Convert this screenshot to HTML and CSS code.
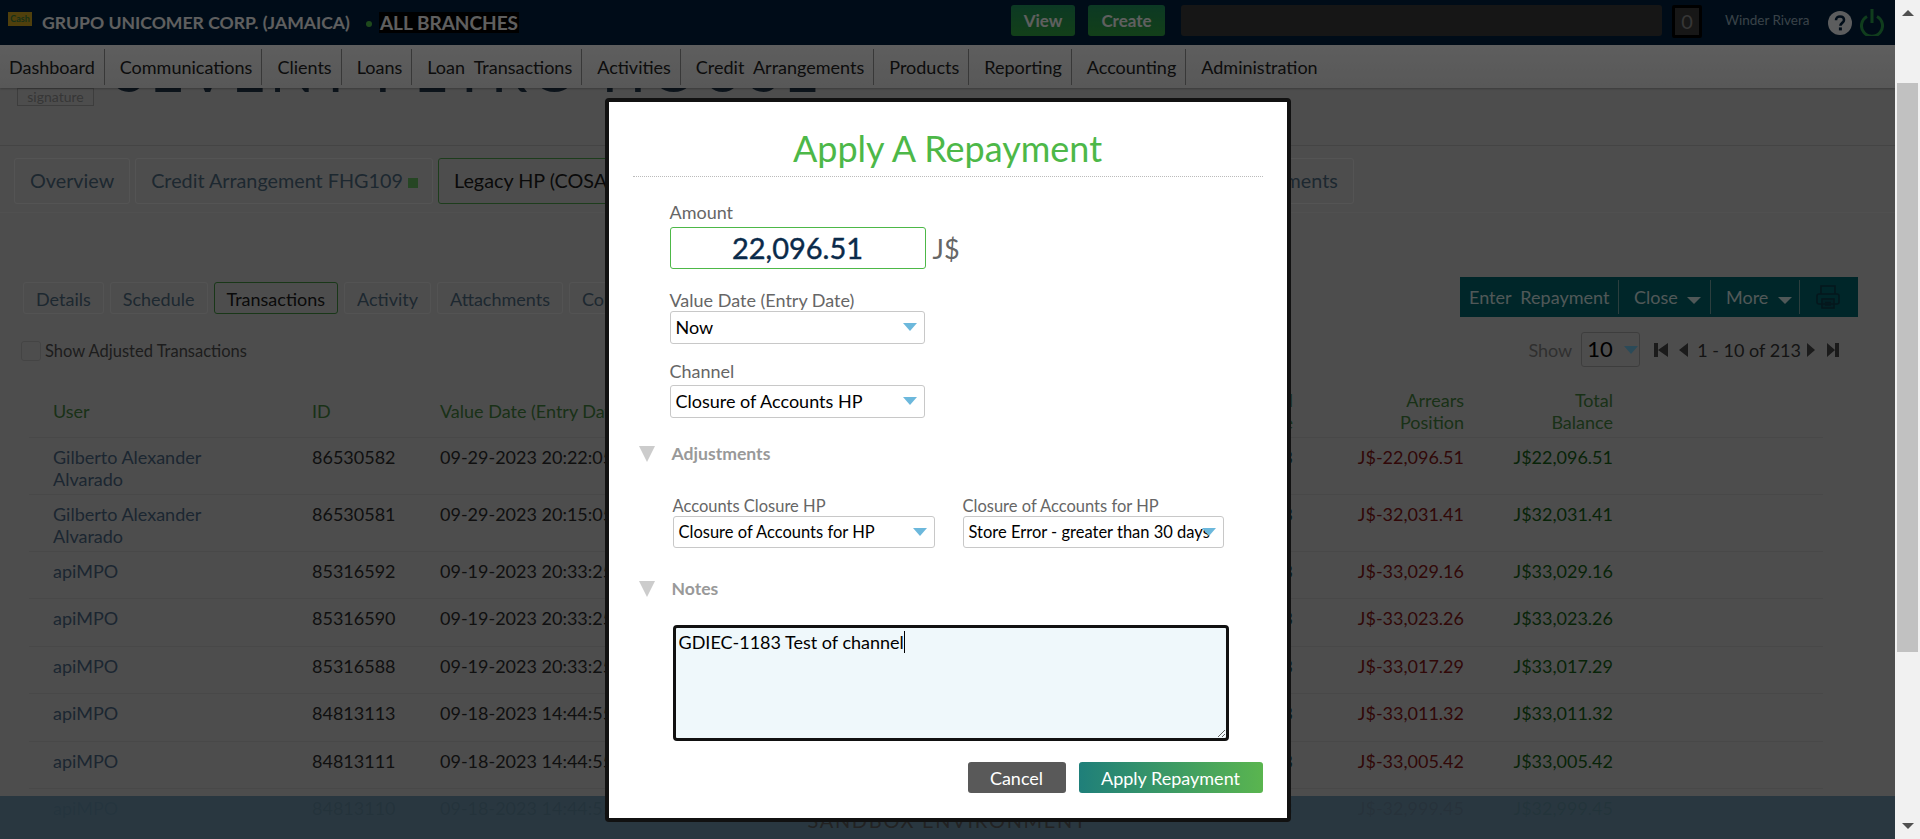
FILE: index.html
```html
<!DOCTYPE html>
<html lang="en">

<head>
    <meta charset="UTF-8">
    <title>Apply A Repayment</title>
    <link rel="stylesheet" href="styles.css">
</head>

<body>
    <div class="viewport">
        <header class="topbar">
            <div class="logo">Cash</div>
            <span class="company">GRUPO UNICOMER CORP. (JAMAICA)</span>
            <span class="dot"></span>
            <span class="branches">ALL BRANCHES</span>
            <button class="top-btn view-btn">View</button>
            <button class="top-btn create-btn">Create</button>
            <div class="search"></div>
            <div class="counter">0</div>
            <span class="username">Winder Rivera</span>
            <svg class="help" width="24" height="24" viewBox="0 0 24 24">
                <circle cx="12" cy="12" r="12" fill="#fff" />
                <path d="M8 9.2C8 6.8 9.8 5.5 12 5.5s4 1.3 4 3.5c0 3-3.6 2.8-3.6 5.8" fill="none" stroke="#00203c" stroke-width="2.6" />
                <rect x="10.9" y="16.4" width="3" height="3" fill="#00203c" />
            </svg>
            <svg class="power" width="24" height="27" viewBox="0 0 24 27">
                <path d="M7 7.5a10.5 10.5 0 1 0 10 0" fill="none" stroke="#2a9a4a" stroke-width="3" />
                <rect x="10.5" y="0" width="3" height="14" fill="#2a9a4a" />
            </svg>
        </header>

        <nav class="mainnav">
            <a class="nav-first">Dashboard</a>
            <a>Communications</a>
            <a>Clients</a>
            <a>Loans</a>
            <a>Loan&nbsp; Transactions</a>
            <a>Activities</a>
            <a>Credit&nbsp; Arrangements</a>
            <a>Products</a>
            <a>Reporting</a>
            <a>Accounting</a>
            <a class="nav-last">Administration</a>
        </nav>

        <main class="content">
            <section class="client-head">
                <div class="signature">signature</div>
                <div class="client-name">SEVENT PETRO HOUSE</div>
            </section>

            <div class="account-tabs">
                <a class="acc-tab">Overview</a>
                <a class="acc-tab acc-credit">Credit Arrangement FHG109 <i class="square"></i></a>
                <a class="acc-tab acc-active">Legacy HP (COSA)</a>
                <a class="acc-tab">Statements</a>
            </div>

            <div class="action-row">
                <div class="sub-tabs">
                    <a class="sub-tab">Details</a>
                    <a class="sub-tab">Schedule</a>
                    <a class="sub-tab sub-active">Transactions</a>
                    <a class="sub-tab">Activity</a>
                    <a class="sub-tab">Attachments</a>
                    <a class="sub-tab">Communications</a>
                </div>
                <div class="toolbar">
                    <a class="tool tool-enter">Enter&nbsp; Repayment</a>
                    <a class="tool tool-close">Close <i class="caret"></i></a>
                    <a class="tool tool-more">More <i class="caret"></i></a>
                    <svg class="printer" width="24" height="24" viewBox="0 0 24 24" fill="none" stroke="#0c3a48" stroke-width="1.6">
                        <path d="M5 9V1h14v8" />
                        <rect x="1" y="9" width="22" height="10" rx="2" />
                        <rect x="6" y="14" width="12" height="9" fill="#0c3a48" fill-opacity=".3" />
                        <path d="M9 17.500h6M9 20h6" />
                    </svg>
                </div>
            </div>

            <div class="filter-row">
                <label class="adjusted"><i class="check"></i>Show Adjusted Transactions</label>
                <div class="pager">
                    <span class="show">Show</span>
                    <div class="page-size">10<i class="arrow"></i></div>
                    <svg class="pg-icon pg-first" width="14" height="14" viewBox="0 0 14 14"><path d="M0 0h4v14H0zM14 0v14L4 7z" /></svg>
                    <svg class="pg-icon pg-prev" width="9" height="14" viewBox="0 0 9 14"><path d="M9 0v14L0 7z" /></svg>
                    <span class="pg-text">1 - 10 of 213</span>
                    <svg class="pg-icon pg-next" width="8" height="14" viewBox="0 0 8 14"><path d="M0 0v14l8-7z" /></svg>
                    <svg class="pg-icon pg-last" width="12" height="14" viewBox="0 0 12 14"><path d="M8 0h4v14H8zM0 0v14l8-7z" /></svg>
                </div>
            </div>

            <table class="tx-table">
                <thead>
                    <tr>
                        <th class="c-user">User</th>
                        <th class="c-id">ID</th>
                        <th class="c-date">Value Date (Entry Date)</th>
                        <th class="c-num c-prin">Principal<br>Balance</th>
                        <th class="c-num c-arr">Arrears<br>Position</th>
                        <th class="c-num c-tot">Total<br>Balance</th>
                        <th></th>
                    </tr>
                </thead>
                <tbody>
                    <tr><td class="user">Gilberto Alexander<br>Alvarado</td><td>86530582</td><td>09-29-2023 20:22:05</td><td class="num teal">J$0.03</td><td class="num red">J$-22,096.51</td><td class="num green">J$22,096.51</td><td></td></tr>
                    <tr><td class="user">Gilberto Alexander<br>Alvarado</td><td>86530581</td><td>09-29-2023 20:15:05</td><td class="num teal">J$0.03</td><td class="num red">J$-32,031.41</td><td class="num green">J$32,031.41</td><td></td></tr>
                    <tr><td class="user">apiMPO</td><td>85316592</td><td>09-19-2023 20:33:25</td><td class="num teal">J$0.03</td><td class="num red">J$-33,029.16</td><td class="num green">J$33,029.16</td><td></td></tr>
                    <tr><td class="user">apiMPO</td><td>85316590</td><td>09-19-2023 20:33:25</td><td class="num teal">J$0.03</td><td class="num red">J$-33,023.26</td><td class="num green">J$33,023.26</td><td></td></tr>
                    <tr><td class="user">apiMPO</td><td>85316588</td><td>09-19-2023 20:33:25</td><td class="num teal">J$0.03</td><td class="num red">J$-33,017.29</td><td class="num green">J$33,017.29</td><td></td></tr>
                    <tr><td class="user">apiMPO</td><td>84813113</td><td>09-18-2023 14:44:55</td><td class="num teal">J$0.03</td><td class="num red">J$-33,011.32</td><td class="num green">J$33,011.32</td><td></td></tr>
                    <tr><td class="user">apiMPO</td><td>84813111</td><td>09-18-2023 14:44:55</td><td class="num teal">J$0.03</td><td class="num red">J$-33,005.42</td><td class="num green">J$33,005.42</td><td></td></tr>
                    <tr><td class="user">apiMPO</td><td>84813110</td><td>09-18-2023 14:44:55</td><td class="num teal">J$0.03</td><td class="num red">J$-32,999.45</td><td class="num green">J$32,999.45</td><td></td></tr>
                </tbody>
            </table>
        </main>

        <footer class="sandbox">SANDBOX ENVIRONMENT</footer>

        <div class="overlay">
            <div class="modal">
                <h2 class="modal-title">Apply A Repayment</h2>

                <div class="form-block">
                    <div class="field-label">Amount</div>
                    <div class="amount-row">
                        <div class="amount">22,096.51</div>
                        <span class="currency">J$</span>
                    </div>

                    <div class="field-label label-date">Value Date (Entry Date)</div>
                    <div class="select select-wide">Now<i class="arrow"></i></div>

                    <div class="field-label label-channel">Channel</div>
                    <div class="select select-wide">Closure of Accounts HP<i class="arrow"></i></div>
                </div>

                <div class="section-head head-adjust"><i class="tri"></i>Adjustments</div>

                <div class="adjust-grid">
                    <div>
                        <div class="field-label">Accounts Closure HP</div>
                        <div class="select">Closure of Accounts for HP<i class="arrow"></i></div>
                    </div>
                    <div>
                        <div class="field-label">Closure of Accounts for HP</div>
                        <div class="select">Store Error - greater than 30 days<i class="arrow"></i></div>
                    </div>
                </div>

                <div class="section-head head-notes"><i class="tri"></i>Notes</div>

                <div class="notes">GDIEC-1183 Test of channel<span class="text-caret"></span></div>

                <div class="modal-actions">
                    <button class="btn-cancel">Cancel</button>
                    <button class="btn-apply">Apply Repayment</button>
                </div>
            </div>
        </div>
    </div>

    <div class="scrollbar">
        <i class="sb-up"></i>
        <div class="sb-thumb"></div>
        <i class="sb-down"></i>
    </div>
</body>

</html>
```

FILE: styles.css
```css
* {
    box-sizing: border-box;
}

html,
body {
    height: 100%;
    margin: 0;
    overflow: hidden;
}

body {
    display: flex;
    font-family: Lato, "Liberation Sans", sans-serif;
    font-size: 17px;
    color: #333;
}

i {
    display: inline-block;
    font-style: normal;
}

.viewport {
    flex: 1;
    position: relative;
    overflow: hidden;
    background: #c1c1c1;
}

/* top bar */
.topbar {
    height: 45px;
    display: flex;
    align-items: center;
    position: relative;
    z-index: 3;
    padding: 0 11px 0 8px;
    background: #00203c;
    color: #eee;
}

.logo {
    width: 24px;
    height: 14px;
    margin-top: -7px;
    background: #c8a020;
    color: #3a7a3a;
    font-size: 9px;
    font-weight: bold;
    line-height: 14px;
    text-align: center;
}

.company {
    margin-left: 10px;
    font-size: 17.600px;
    font-weight: bold;
    white-space: nowrap;
}

.dot {
    width: 6px;
    height: 6px;
    margin: 3px 7px 0 16px;
    border-radius: 50%;
    background: #4db848;
}

.branches {
    padding: 0 1px;
    background: #000;
    font-size: 19px;
    font-weight: bold;
    line-height: 21px;
    white-space: nowrap;
}

.top-btn {
    height: 31px;
    margin-top: -4px;
    border: none;
    border-radius: 3px;
    background: linear-gradient(#1f8f5a, #2f9f3f);
    color: #eee;
    font: bold 17px Lato, sans-serif;
}

.view-btn {
    width: 64px;
    margin-left: auto;
}

.create-btn {
    width: 77px;
    margin-left: 13px;
}

.search {
    width: 481px;
    height: 31px;
    margin: -4px 0 0 16px;
    border-radius: 3px;
    background: #383838;
}

.counter {
    width: 30px;
    height: 33px;
    margin: -2px 0 0 10px;
    border: 3px solid #000;
    border-radius: 2px;
    background: #3a3a3a;
    color: #888;
    font-size: 20px;
    line-height: 27px;
    text-align: center;
}

.username {
    width: 84px;
    margin: -5px 0 0 23px;
    color: #8fa5b5;
    font-size: 13.500px;
    white-space: nowrap;
}

.help {
    margin: 1px 0 0 19px;
    opacity: .9;
}

.power {
    margin: -1px 0 0 8px;
}

/* main nav */
.mainnav {
    height: 43px;
    display: flex;
    align-items: center;
    position: relative;
    z-index: 2;
    background: linear-gradient(#ebebeb, #dcdcdc);
    box-shadow: 0 1px 2px rgba(0, 0, 0, .25);
}

.mainnav a {
    height: 36px;
    padding: 0 9px 0 15px;
    border-right: 1px solid #8c8c8c;
    color: #222;
    font-size: 18px;
    line-height: 36px;
    white-space: nowrap;
}

.mainnav .nav-first {
    padding-left: 9px;
}

.mainnav .nav-last {
    border-right: none;
}

/* scrolled page */
.content {
    position: relative;
}

.client-head {
    height: 58px;
    display: flex;
    align-items: flex-end;
    border-bottom: 1px solid #aaa;
    padding-bottom: 39px;
}

.signature {
    width: 77px;
    height: 18px;
    margin-left: 17px;
    border: 1px solid #9a9a9a;
    color: #888;
    font-size: 14px;
    line-height: 16px;
    text-align: center;
}

.client-name {
    margin: 0 0 7px 20px;
    color: #1f3245;
    font-size: 58px;
    line-height: 58px;
    letter-spacing: 4.500px;
    white-space: nowrap;
}

.account-tabs {
    height: 67px;
    display: flex;
    gap: 5px;
    padding: 12px 0 0 14px;
    border-bottom: 1px solid #c8c8c8;
}

.acc-tab {
    height: 46px;
    padding: 0 15px;
    border: 1px solid #d2d2d2;
    border-radius: 3px;
    color: #4a6478;
    font-size: 19.800px;
    line-height: 42px;
    white-space: nowrap;
}

.acc-credit {
    padding-right: 14px;
}

.acc-active {
    width: 781px;
    border-color: #4a9a48;
    color: #1a1a1a;
}

.square {
    width: 10px;
    height: 10px;
    margin-left: 0;
    background: #5fae5a;
}

.action-row {
    height: 105px;
    display: flex;
    align-items: flex-start;
    justify-content: space-between;
    padding: 64px 37px 0 23px;
}

.sub-tabs {
    display: flex;
    gap: 6px;
    margin-top: 5px;
}

.sub-tab {
    height: 32px;
    padding: 0 12px;
    border: 1px solid #d0d0d0;
    border-radius: 3px;
    color: #4a6478;
    font-size: 18px;
    line-height: 32px;
    white-space: nowrap;
}

.sub-active {
    border-color: #3f8a3d;
    color: #1a1a1a;
}

.toolbar {
    width: 398px;
    height: 40px;
    display: flex;
    align-items: center;
    background: #025f66;
}

.tool {
    height: 34px;
    border-right: 1px solid #6f9c9c;
    color: #c8dcdc;
    font-size: 18px;
    line-height: 35px;
    white-space: nowrap;
}

.tool-enter {
    width: 159px;
    padding-left: 9px;
}

.tool-close {
    width: 92px;
    padding-left: 15px;
}

.tool-more {
    width: 89px;
    padding-left: 15px;
}

.caret {
    width: 0;
    height: 0;
    margin-left: 5px;
    border: 7px solid transparent;
    border-top-color: #c8dcdc;
    border-bottom: none;
}

.printer {
    margin-left: 16px;
}

.filter-row {
    height: 0;
    display: flex;
    justify-content: space-between;
    padding: 0 56px 0 21px;
}

.adjusted {
    height: 20px;
    display: flex;
    align-items: center;
    margin-top: 23px;
    color: #4a4a4a;
    font-size: 16.500px;
    white-space: nowrap;
}

.check {
    width: 20px;
    height: 20px;
    margin-right: 4px;
    border: 1px solid #aaa;
    border-radius: 3px;
}

.pager {
    height: 35px;
    display: flex;
    align-items: center;
    margin-top: 14px;
}

.show {
    color: #777;
    font-size: 18px;
}

.page-size {
    width: 59px;
    height: 35px;
    position: relative;
    margin: 0 14px 0 9px;
    padding-left: 5px;
    border: 1px solid #9a9a9a;
    border-radius: 3px;
    color: #000;
    font-size: 22px;
    line-height: 31px;
}

.page-size .arrow {
    right: 1px;
    top: 13px;
    border-top-color: #6cb8dc;
}

.pg-icon {
    fill: #444;
}

.pg-prev {
    margin-left: 11px;
}

.pg-text {
    margin: 0 6px 0 9px;
    color: #333;
    font-size: 18px;
    white-space: nowrap;
}

.pg-last {
    margin-left: 12px;
}

/* transactions */
.tx-table {
    width: 1794px;
    margin: 69px 0 0 29px;
    border-collapse: collapse;
    table-layout: fixed;
    font-size: 18px;
    line-height: 22px;
}

.tx-table th {
    height: 50px;
    padding: 0 0 2px;
    border-bottom: 1px solid #b5b5b5;
    color: #3f7a3a;
    font-weight: normal;
    text-align: left;
    vertical-align: middle;
}

.tx-table td {
    height: 47.500px;
    padding: 8px 0 4px;
    border-bottom: 1px solid #b5b5b5;
    color: #2a2a2a;
    vertical-align: top;
}

.tx-table th.c-num,
.tx-table td.num {
    text-align: right;
}

.c-user {
    width: 283px;
    padding-left: 24px !important;
}

.tx-table td.user {
    padding-left: 24px;
    color: #46607a;
}

.c-id {
    width: 128px;
}

.c-date {
    width: 400px;
}

.c-prin {
    width: 453px;
}

.c-arr {
    width: 171px;
}

.c-tot {
    width: 149px;
}

.tx-table td.teal {
    color: #1a4a3f;
}

.tx-table td.red {
    color: #7a1414;
}

.tx-table td.green {
    color: #155a15;
}

.sandbox {
    position: absolute;
    left: 0;
    right: 0;
    bottom: 0;
    height: 43px;
    z-index: 1;
    background: rgba(95, 135, 158, .92);
    color: #555;
    font-size: 20px;
    letter-spacing: 1.700px;
    line-height: 48px;
    text-align: center;
}

/* dialog */
.overlay {
    position: absolute;
    inset: 0;
    z-index: 5;
    display: flex;
    justify-content: center;
    align-items: flex-start;
    padding-top: 98px;
    background: rgba(0, 0, 0, .6);
}

.modal {
    width: 686px;
    height: 724px;
    padding: 0 24px;
    border: 4px solid #111;
    border-radius: 4px;
    background: #fff;
}

.modal-title {
    height: 75px;
    margin: 0;
    border-bottom: 1px dotted #bbb;
    color: #4db848;
    font-size: 36px;
    font-weight: normal;
    line-height: 93px;
    text-align: center;
}

.form-block {
    padding: 24px 0 0 37px;
}

.field-label {
    color: #666;
    font-size: 18px;
    line-height: 22px;
}

.amount-row {
    display: flex;
    align-items: center;
    margin-top: 4px;
}

.amount {
    width: 256px;
    height: 42px;
    border: 1px solid #4db848;
    border-radius: 3px;
    color: #0a2a4a;
    font-size: 29px;
    line-height: 40px;
    text-align: center;
    -webkit-text-stroke: .4px #0a2a4a;
}

.currency {
    margin-left: 7px;
    color: #666;
    font-size: 27px;
}

.select {
    height: 32px;
    position: relative;
    padding-left: 5px;
    border: 1px solid #c8c8c8;
    border-radius: 3px;
    color: #000;
    font-size: 18px;
    line-height: 30px;
    white-space: nowrap;
}

.select-wide {
    width: 255px;
    height: 33px;
}

.arrow {
    position: absolute;
    right: 7px;
    top: 11px;
    width: 0;
    height: 0;
    border: 7px solid transparent;
    border-top: 8px solid #6cb8dc;
    border-bottom: none;
}

.label-date {
    margin-top: 20px;
}

.label-channel {
    margin: 16px 0 3px;
}

.section-head {
    display: flex;
    align-items: center;
    color: #999;
    font-size: 17.600px;
    font-weight: bold;
    line-height: 22px;
}

.tri {
    width: 0;
    height: 0;
    margin-right: 17px;
    border: 8.500px solid transparent;
    border-top: 16px solid #ccc;
    border-bottom: none;
}

.head-adjust {
    margin: 25px 0 0 6px;
}

.adjust-grid {
    display: grid;
    grid-template-columns: 262px 261px;
    gap: 28px;
    margin: 30px 0 0 40px;
}

.adjust-grid .field-label {
    margin-bottom: -1px;
    font-size: 16.500px;
}

.adjust-grid .select {
    font-size: 16.500px;
}

.head-notes {
    margin: 30px 0 0 6px;
}

.notes {
    width: 556px;
    height: 116px;
    margin: 25px 0 0 40px;
    padding: 3px;
    border: 3px solid #111;
    border-radius: 4px;
    background: #eff8fb;
    color: #000;
    font-size: 18px;
    line-height: 22px;
    overflow: auto;
    resize: both;
}

.text-caret {
    display: inline-block;
    width: 1px;
    height: 22px;
    vertical-align: top;
    background: #000;
}

.modal-actions {
    display: flex;
    justify-content: flex-end;
    gap: 13px;
    margin-top: 21px;
}

.modal-actions button {
    height: 31px;
    border: none;
    border-radius: 3px;
    color: #fff;
    font: 18px Lato, sans-serif;
}

.btn-cancel {
    width: 98px;
    background: #595959;
}

.btn-apply {
    width: 184px;
    background: linear-gradient(to right, #1f7f7a, #5ab54f);
}

/* page scrollbar */
.scrollbar {
    width: 25px;
    position: relative;
    background: #f1f1f1;
}

.sb-up,
.sb-down {
    position: absolute;
    left: 7px;
    width: 0;
    height: 0;
    border: 6px solid transparent;
}

.sb-up {
    top: 10px;
    border-top: none;
    border-bottom: 6px solid #505050;
}

.sb-down {
    top: 823px;
    border-bottom: none;
    border-top: 6px solid #505050;
}

.sb-thumb {
    width: 21px;
    height: 569px;
    margin: 83px 0 0 2px;
    background: #c1c1c1;
}
```
